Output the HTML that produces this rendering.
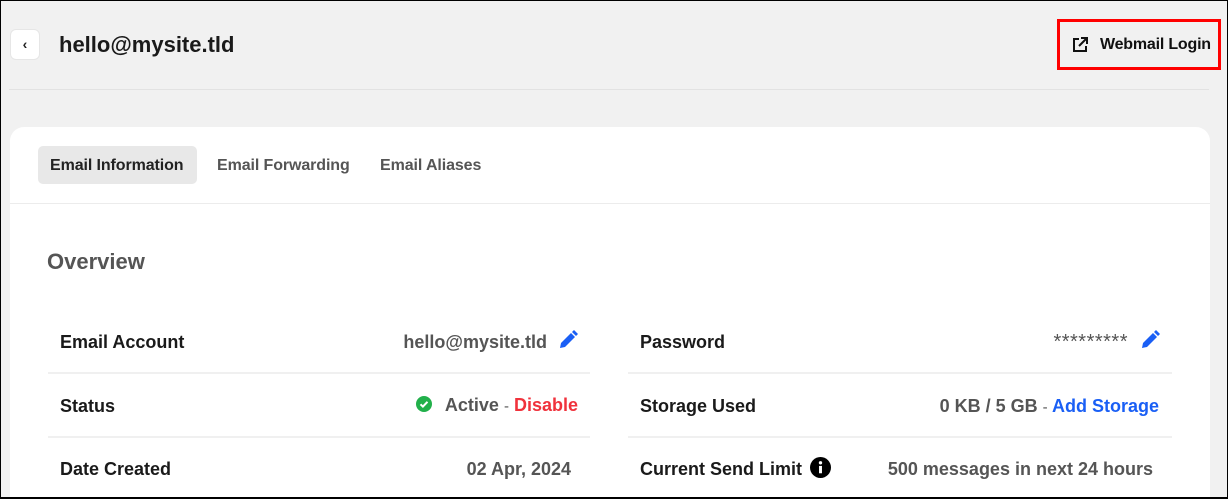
<!DOCTYPE html>
<html><head><style>
*{box-sizing:border-box;margin:0;padding:0}
html,body{width:1228px;height:499px;overflow:hidden}
body{background:#f1f1f1;font-family:"Liberation Sans",sans-serif;position:relative}
.abs{position:absolute}
.frame{left:0;top:0;width:1228px;height:499px;border:1px solid #000;border-bottom:2px solid #000;z-index:10;pointer-events:none}
.back{left:10px;top:29px;width:30px;height:31px;background:#fff;border:1px solid #e6e6e6;border-radius:6px;font-size:14px;font-weight:bold;text-align:center;line-height:28px;color:#222}
h1{position:absolute;left:59px;top:32px;font-size:22px;font-weight:bold;color:#1a1a1a}
.wm{left:1057px;top:19px;width:164px;height:51px;border:3px solid #f00;font-size:16px;font-weight:bold;color:#111;display:flex;align-items:center;padding-left:12px;gap:12px;letter-spacing:-0.2px}
.hr{left:9px;top:89px;width:1200px;height:1px;background:#e2e2e2}
.card{left:10px;top:127px;width:1200px;height:372px;background:#fff;border-radius:14px 14px 0 0}
.tabs{left:10px;top:203px;width:1200px;height:1px;background:#ececec}
.tab{top:147px;height:38px;line-height:38px;font-size:16px;font-weight:bold;color:#555;padding:0 12px;border-radius:5px;letter-spacing:-0.1px}
.lbl{font-size:18px;font-weight:bold;color:#1a1a1a}
.val{font-size:18px;font-weight:bold;color:#555;text-align:right}
.line{height:2px;background:#f0f0f0}
</style></head><body>
<div class="abs frame"></div>
<div class="abs back">‹</div>
<h1>hello@mysite.tld</h1>
<div class="abs wm"><svg width="16" height="16" viewBox="0 0 16 16" fill="none" stroke="#111" stroke-width="2"><path d="M7 2H2v12h12V9"/><path d="M9 1h6v6M15 1L7 9"/></svg>Webmail Login</div>
<div class="abs hr"></div>
<div class="abs card"></div>
<div class="abs tabs"></div>
<div class="abs tab" style="left:38px;top:146px;width:159px;background:#e8e8e8;color:#222"></div>
<div class="abs tab" style="left:38px;color:#222">Email Information</div>
<div class="abs tab" style="left:205px">Email Forwarding</div>
<div class="abs tab" style="left:368px">Email Aliases</div>
<div class="abs" style="left:47px;top:249px;font-size:22px;font-weight:bold;color:#555">Overview</div>

<div class="abs lbl" style="left:60px;top:332px">Email Account</div>
<div class="abs val" style="left:300px;top:332px;width:247px">hello@mysite.tld</div>
<svg class="abs" style="left:558px;top:330px" width="20" height="20" viewBox="0 0 20 20"><path d="M2 18l1-5 10-10 4 4-10 10z" fill="#1a5ff5"/><path d="M14 2l2-2 4 4-2 2z" fill="#1a5ff5"/></svg>
<div class="abs line" style="left:48px;top:372px;width:542px"></div>
<div class="abs lbl" style="left:60px;top:396px">Status</div>
<svg class="abs" style="left:416px;top:396px" width="16" height="16" viewBox="0 0 16 16"><circle cx="8" cy="8" r="8" fill="#22b04b"/><path d="M4.5 8.3l2.4 2.3 4.6-4.8" stroke="#fff" stroke-width="2" fill="none"/></svg>
<div class="abs val" style="left:440px;top:395px;width:138px"><span>Active</span> <span style="font-weight:normal;font-size:15px">-</span> <span style="color:#f0323c">Disable</span></div>
<div class="abs line" style="left:48px;top:436px;width:542px"></div>
<div class="abs lbl" style="left:60px;top:459px">Date Created</div>
<div class="abs val" style="left:400px;top:459px;width:171px">02 Apr, 2024</div>

<div class="abs lbl" style="left:640px;top:332px">Password</div>
<div class="abs val" style="left:1000px;top:331px;width:128px;font-weight:normal;font-size:20px;letter-spacing:0.5px">*********</div>
<svg class="abs" style="left:1140px;top:330px" width="20" height="20" viewBox="0 0 20 20"><path d="M2 18l1-5 10-10 4 4-10 10z" fill="#1a5ff5"/><path d="M14 2l2-2 4 4-2 2z" fill="#1a5ff5"/></svg>
<div class="abs line" style="left:628px;top:372px;width:544px"></div>
<div class="abs lbl" style="left:640px;top:396px">Storage Used</div>
<div class="abs val" style="left:860px;top:396px;width:299px">0 KB / 5 GB <span style="font-weight:normal;font-size:15px">-</span> <span style="color:#1a5ff5">Add Storage</span></div>
<div class="abs line" style="left:628px;top:436px;width:544px"></div>
<div class="abs lbl" style="left:640px;top:459px">Current Send Limit</div>
<svg class="abs" style="left:810px;top:457px" width="21" height="21" viewBox="0 0 20 20"><circle cx="10" cy="10" r="10" fill="#000"/><rect x="8.6" y="8.5" width="2.8" height="7" fill="#fff"/><circle cx="10" cy="5.5" r="1.6" fill="#fff"/></svg>
<div class="abs val" style="left:860px;top:459px;width:293px">500 messages in next 24 hours</div>
</body></html>
